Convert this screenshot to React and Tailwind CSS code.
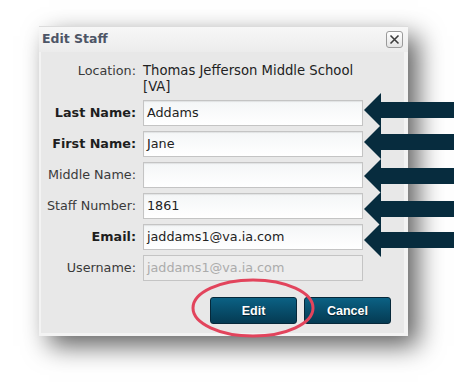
import React from "react";

const arrowYs = [110, 142, 176, 209, 240];

function Row({ label, bold, value, disabled }) {
  return (
    <div className="flex items-center h-[26px]">
      <div
        className={
          "w-[96px] pr-[1px] text-right " +
          (bold ? "font-bold text-[#1e1e1e]" : "text-[#3a3a3a]")
        }
      >
        {label}
      </div>
      <div
        className={
          "ml-[6px] w-[220px] h-[26px] border border-[#c4c4c4] flex items-center px-[3px] " +
          (disabled
            ? "bg-[#ededed] text-[#ababab]"
            : "bg-gradient-to-b from-[#f4f6f7] to-white text-[#222] shadow-[inset_0_1px_1px_rgba(0,0,0,0.08)]")
        }
      >
        {value}
      </div>
    </div>
  );
}

export default function App() {
  return (
    <div
      className="relative w-[475px] h-[385px] bg-white overflow-hidden pl-[39px] pt-[26px]"
      style={{ fontFamily: '"DejaVu Sans", sans-serif' }}
    >
      <div className="w-[369px] h-[310px] bg-[#f3f3f3] border-t border-[#dcdcdc] shadow-[10px_10px_24px_rgba(0,0,0,0.62)] flex flex-col">
        <div className="h-[25px] flex items-center justify-between pl-[3px] pr-[5px] bg-gradient-to-b from-[#f7f7f7] to-[#ececec]">
          <span className="text-[12.5px] font-bold text-[#4d5566]">Edit Staff</span>
          <div className="w-[17px] h-[17px] border border-[#9a9a9a] rounded-[3px] bg-gradient-to-b from-white to-[#e4e4e4] flex items-center justify-center">
            <svg width="11" height="11" viewBox="0 0 11 11">
              <path d="M1.5 1.5 L9.5 9.5 M9.5 1.5 L1.5 9.5" stroke="#3c3c3c" strokeWidth="1.6" />
            </svg>
          </div>
        </div>
        <div className="ml-[2px] mr-[4px] mb-[3px] flex-1 bg-[#e8e8e8] text-[12.75px] leading-[16px] pt-[11px] flex flex-col gap-[5px]">
          <div className="flex">
            <div className="w-[96px] pr-[1px] text-right text-[#3a3a3a]">Location:</div>
            <div className="ml-[6px] text-[#222] text-[13.2px]">
              Thomas Jefferson Middle School
              <br />
              [VA]
            </div>
          </div>
          <Row label="Last Name:" bold value="Addams" />
          <Row label="First Name:" bold value="Jane" />
          <Row label="Middle Name:" value="" />
          <Row label="Staff Number:" value="1861" />
          <Row label="Email:" bold value="jaddams1@va.ia.com" />
          <Row label="Username:" value="jaddams1@va.ia.com" disabled />
          <div className="flex justify-end gap-[7px] pr-[13px] mt-[11px]">
            <button
              className="w-[87px] h-[27px] rounded-[3px] border border-[#06283a] bg-gradient-to-b from-[#0b6184] to-[#053b53] text-white font-bold text-[12.5px] [text-shadow:0_1px_1px_rgba(0,0,0,0.6)]"
              style={{ fontFamily: '"Liberation Sans", Arial, sans-serif' }}
            >
              Edit
            </button>
            <button
              className="w-[87px] h-[27px] rounded-[3px] border border-[#06283a] bg-gradient-to-b from-[#0b6184] to-[#053b53] text-white font-bold text-[12.5px] [text-shadow:0_1px_1px_rgba(0,0,0,0.6)]"
              style={{ fontFamily: '"Liberation Sans", Arial, sans-serif' }}
            >
              Cancel
            </button>
          </div>
        </div>
      </div>
      <svg className="absolute left-0 top-0 pointer-events-none" width="475" height="385">
        {arrowYs.map((c) => (
          <polygon
            key={c}
            fill="#072c3e"
            points={`364,${c} 381,${c - 17} 381,${c - 8} 454,${c - 8} 454,${c + 8} 381,${c + 8} 381,${c + 17}`}
          />
        ))}
        <ellipse cx="253" cy="308" rx="60" ry="28" fill="none" stroke="#e2445c" strokeWidth="3" />
      </svg>
    </div>
  );
}
